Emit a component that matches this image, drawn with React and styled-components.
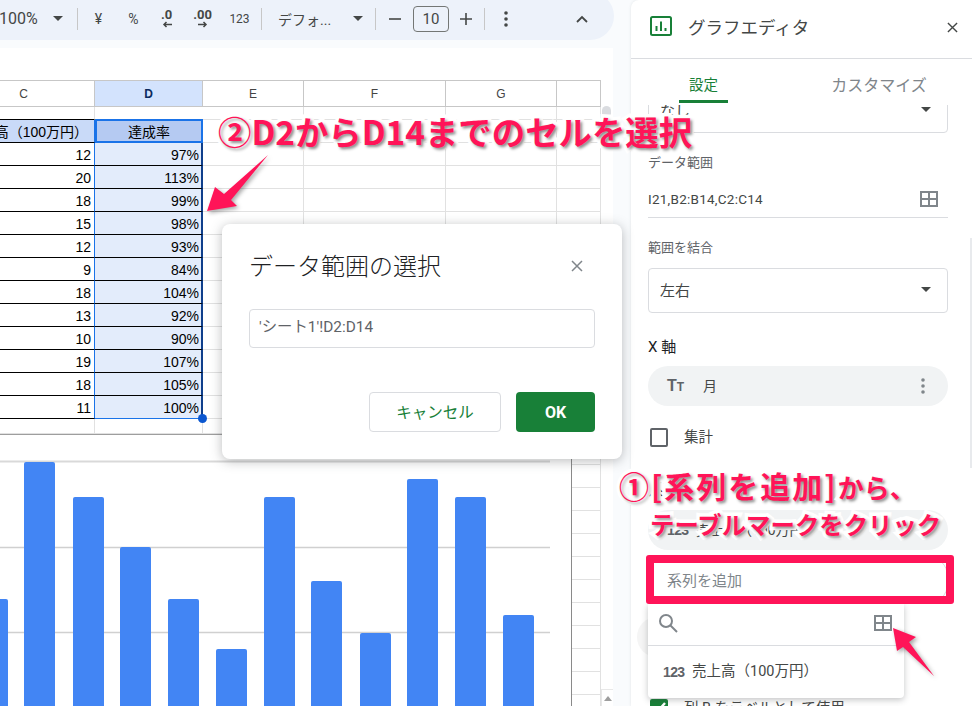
import React from 'react';
import styled, { createGlobalStyle } from 'styled-components';

const months = [
  ['12', '97%'], ['20', '113%'], ['18', '99%'], ['15', '98%'],
  ['12', '93%'], ['9', '84%'], ['18', '104%'], ['13', '92%'],
  ['10', '90%'], ['19', '107%'], ['18', '105%'], ['11', '100%'],
];

const bars = [
  [-23, 599], [24, 462], [73, 497], [120, 547], [168, 599], [216, 649],
  [264, 497], [311, 581], [360, 633], [407, 479], [455, 497], [503, 615],
];

function TableIcon() {
  return (
    <svg width="18" height="16" viewBox="0 0 18 16" fill="none" stroke="#80868b" strokeWidth="2">
      <rect x="1" y="1" width="16" height="14" />
      <path d="M1 8h16M9 1v14" />
    </svg>
  );
}

function CloseIcon({ size = 12, color = '#444746' }) {
  return (
    <svg width={size} height={size} viewBox="0 0 12 12" stroke={color} strokeWidth="1.5">
      <path d="M1 1l10 10M11 1L1 11" />
    </svg>
  );
}

function Kebab({ color = '#444746' }) {
  return (
    <svg width="4" height="16" viewBox="0 0 4 16" fill={color}>
      <circle cx="2" cy="2" r="1.8" />
      <circle cx="2" cy="8" r="1.8" />
      <circle cx="2" cy="14" r="1.8" />
    </svg>
  );
}

function Toolbar() {
  return (
    <ToolbarPill>
      <ZoomLabel>100%</ZoomLabel>
      <ToolButton $w={22}><Caret /></ToolButton>
      <ToolSep $ml={8} />
      <ToolButton $w={35} $ml={3}>¥</ToolButton>
      <ToolButton $w={35}>%</ToolButton>
      <DecimalButton $w={31}>
        <b>.0</b>
        <svg width="10" height="7" viewBox="0 0 10 7" fill="none" stroke="#444746" strokeWidth="1.5">
          <path d="M10 3.5H2M4.5 1L2 3.5 4.5 6" />
        </svg>
      </DecimalButton>
      <DecimalButton $w={41}>
        <b>.00</b>
        <svg width="10" height="7" viewBox="0 0 10 7" fill="none" stroke="#444746" strokeWidth="1.5">
          <path d="M0 3.5h8M5.5 1L8 3.5 5.5 6" />
        </svg>
      </DecimalButton>
      <ToolButton $w={33} $small>123</ToolButton>
      <ToolSep $ml={5} />
      <FontLabel>デフォ...</FontLabel>
      <ToolButton $w={22} $ml={11}><Caret /></ToolButton>
      <ToolSep $ml={6} />
      <ToolButton $w={37}>
        <svg width="12" height="2" viewBox="0 0 12 2"><path d="M0 1h12" stroke="#444746" strokeWidth="1.6" /></svg>
      </ToolButton>
      <SizeBox>10</SizeBox>
      <ToolButton $w={34}>
        <svg width="12" height="12" viewBox="0 0 12 12"><path d="M0 6h12M6 0v12" stroke="#444746" strokeWidth="1.6" /></svg>
      </ToolButton>
      <ToolSep $ml={1} />
      <ToolButton $w={42}><Kebab /></ToolButton>
      <ToolButton $w={34} $ml={38}>
        <svg width="12" height="8" viewBox="0 0 12 8" fill="none" stroke="#444746" strokeWidth="1.8">
          <path d="M1 7l5-5 5 5" />
        </svg>
      </ToolButton>
    </ToolbarPill>
  );
}

function Sheet() {
  return (
    <SheetBody>
      <GridColumn>
        <Cells>
          <ColHead $pr={47}>C</ColHead>
          <ColHead $active>D</ColHead>
          <ColHead>E</ColHead>
          <ColHead>F</ColHead>
          <ColHead>G</ColHead>
          <ColHead />

          <Cell $topTable />
          <Cell $topTable $noRight />
          <Cell /><Cell /><Cell /><Cell />

          <TitleCell>売上高（100万円）</TitleCell>
          <ActiveHead>達成率</ActiveHead>
          <Cell /><Cell /><Cell /><Cell />

          {months.map(([sales, rate], i) => (
            <React.Fragment key={i}>
              <NumberCell>{sales}</NumberCell>
              <RangeCell $last={i === months.length - 1}>
                {rate}
                {i === months.length - 1 && <FillHandle />}
              </RangeCell>
              <Cell /><Cell /><Cell /><Cell />
            </React.Fragment>
          ))}

          <Cell /><Cell /><Cell /><Cell /><Cell /><Cell />
        </Cells>
        <ChartRow>
          <ChartFrame>
            <svg width="571" height="271" viewBox="0 435 571 271">
              <path d="M0 461.5h550" stroke="#d9d9d9" strokeWidth="2" />
              <path d="M0 547.5h550M0 632.5h550" stroke="#d0d0d0" strokeWidth="1.4" />
              {bars.map(([x, top]) => (
                <path
                  key={x}
                  d={`M${x} 720V${top + 2}a2 2 0 0 1 2-2h27a2 2 0 0 1 2 2V720z`}
                  fill="#4285f4"
                />
              ))}
            </svg>
          </ChartFrame>
          <RowStrip />
        </ChartRow>
      </GridColumn>
      <ScrollTrack>
        <ScrollThumb />
        <ScrollButton />
      </ScrollTrack>
    </SheetBody>
  );
}

function RangeDialog() {
  return (
    <Dialog>
      <DialogHead>
        <DialogTitle>データ範囲の選択</DialogTitle>
        <CloseIcon size={12} color="#80868b" />
      </DialogHead>
      <DialogInput>'シート1'!D2:D14</DialogInput>
      <DialogActions>
        <CancelButton>キャンセル</CancelButton>
        <OkButton>OK</OkButton>
      </DialogActions>
    </Dialog>
  );
}

function ChartEditor() {
  return (
    <Panel>
      <PanelHead>
        <svg width="22" height="20" viewBox="0 0 22 20" fill="none">
          <rect x="1" y="1" width="20" height="18" rx="1.5" stroke="#188038" strokeWidth="2" />
          <path d="M6.5 10v5M11 5.5V15M15.5 12v3" stroke="#188038" strokeWidth="2" />
        </svg>
        <PanelTitle>グラフエディタ</PanelTitle>
        <PanelClose><CloseIcon size={11} color="#444746" /></PanelClose>
      </PanelHead>
      <Tabs>
        <Tab $active>設定</Tab>
        <Tab $w={110} $ml={96}>カスタマイズ</Tab>
      </Tabs>
      <ScrollClip>
        <Content>
          <Select>なし<Caret /></Select>
          <FieldLabel $mt={22}>データ範囲</FieldLabel>
          <RangeField>I21,B2:B14,C2:C14<TableIcon /></RangeField>
          <FieldLabel $mt={22}>範囲を結合</FieldLabel>
          <Select $mt={12}>左右<Caret /></Select>
          <SectionLabel $mt={25}>X 軸</SectionLabel>
          <SeriesPill $mt={10}>
            <TypeBadge>T<small>T</small></TypeBadge>
            <PillText>月</PillText>
            <PillMenu><Kebab color="#80868b" /></PillMenu>
          </SeriesPill>
          <CheckRow $mt={21}>
            <CheckBox />
            <CheckText>集計</CheckText>
          </CheckRow>
          <SectionLabel $mt={34}>系列</SectionLabel>
          <SeriesPill $mt={11}>
            <NumBadge>123</NumBadge>
            <PillText>売上高（100万円）</PillText>
          </SeriesPill>
          <AddField>
            系列を追加
            <HoverRing />
            <Menu>
              <MenuSearch>
                <svg width="20" height="20" viewBox="0 0 20 20" fill="none" stroke="#80868b" strokeWidth="2">
                  <circle cx="8" cy="8" r="6" />
                  <path d="M12.5 12.5L19 19" />
                </svg>
                <TableIcon />
              </MenuSearch>
              <MenuItem>
                <NumBadge>123</NumBadge>
                売上高（100万円）
              </MenuItem>
            </Menu>
          </AddField>
          <CheckRow $mt={94}>
            <CheckBox $on>
              <svg width="14" height="12" viewBox="0 0 14 12" fill="none" stroke="#fff" strokeWidth="2.4">
                <path d="M1 6l4 4 8-9" />
              </svg>
            </CheckBox>
            <CheckText>列 B をラベルとして使用</CheckText>
          </CheckRow>
        </Content>
      </ScrollClip>
      <PanelScroll />
    </Panel>
  );
}

export default function App() {
  return (
    <Root>
      <GlobalStyle />
      <SheetSide>
        <Toolbar />
        <FormulaBar />
        <Sheet />
      </SheetSide>
      <ChartEditor />
      <RangeDialog />

      <CalloutTop>②D2からD14までのセルを選択</CalloutTop>
      <Callout1>
        <Line1>①[系列を追加]<small>から、</small></Line1>
        <Line2>テーブルマークをクリック</Line2>
      </Callout1>
      <RedBox />
      <ArrowSvg width="972" height="706" viewBox="0 0 972 706">
        <path d="M207 211L215 187L224 194L268 155L231 200L237 206Z" />
        <path d="M893 628L916 637L909 642L934 676L903 647L897 651Z" />
      </ArrowSvg>
    </Root>
  );
}

const GlobalStyle = createGlobalStyle`
  html, body {
    margin: 0;
    padding: 0;
    background: #f9fbfd;
  }
`;

const Root = styled.div`
  position: relative;
  display: flex;
  width: 972px;
  height: 706px;
  overflow: hidden;
  background: #f9fbfd;
  font-family: Roboto, "Noto Sans CJK JP", sans-serif;
  color: #444746;
`;

const SheetSide = styled.div`
  display: flex;
  flex-direction: column;
  width: 631px;
  flex: none;
`;

const ToolbarPill = styled.div`
  display: flex;
  align-items: center;
  box-sizing: border-box;
  width: 614px;
  height: 48px;
  margin-top: -8px;
  padding-top: 5px;
  background: #edf2fa;
  border-radius: 0 24px 24px 0;
  flex: none;
`;

const ZoomLabel = styled.span`
  width: 48px;
  margin-left: -1px;
  flex: none;
  font-size: 16px;
`;

const ToolButton = styled.span`
  display: flex;
  align-items: center;
  justify-content: center;
  flex: none;
  width: ${p => p.$w}px;
  margin-left: ${p => p.$ml || 0}px;
  font-size: ${p => (p.$small ? 12 : 14)}px;
`;

const DecimalButton = styled(ToolButton)`
  flex-direction: column;
  line-height: 12px;
  font-size: 13px;

  b {
    font-weight: 700;
  }
`;

const Caret = styled.i`
  display: block;
  width: 0;
  height: 0;
  border-left: 5px solid transparent;
  border-right: 5px solid transparent;
  border-top: 5px solid #444746;
`;

const ToolSep = styled.span`
  width: 1px;
  height: 22px;
  flex: none;
  margin-left: ${p => p.$ml}px;
  background: #c7c7c7;
`;

const FontLabel = styled.span`
  width: 58px;
  margin-left: 16px;
  flex: none;
  font-size: 14px;
  white-space: nowrap;
`;

const SizeBox = styled.span`
  box-sizing: border-box;
  width: 36px;
  height: 26px;
  flex: none;
  border: 1px solid #747775;
  border-radius: 4px;
  font-size: 15px;
  line-height: 24px;
  text-align: center;
`;

const FormulaBar = styled.div`
  width: 613px;
  height: 32px;
  margin-top: 8px;
  background: #fff;
  flex: none;
`;

const SheetBody = styled.div`
  display: flex;
  width: 613px;
  flex: 1;
  min-height: 0;
  background: #fff;
`;

const GridColumn = styled.div`
  display: flex;
  flex-direction: column;
  width: 601px;
  flex: none;
`;

const Cells = styled.div`
  display: grid;
  grid-template-columns: 95px 108px 101px 142px 111px 44px;
  grid-template-rows: 27px 13px repeat(13, 23px) 15px;
  font-family: "Liberation Sans", "Noto Sans CJK JP", sans-serif;
  font-size: 14px;
  color: #000;
`;

const Cell = styled.div`
  box-sizing: border-box;
  border-right: 1px solid ${p => (p.$noRight ? 'transparent' : '#e1e1e1')};
  border-bottom: 1px solid ${p => (p.$topTable ? '#000' : '#e1e1e1')};
`;

const ColHead = styled.div`
  box-sizing: border-box;
  display: flex;
  align-items: center;
  justify-content: center;
  padding-right: ${p => p.$pr || 0}px;
  border-top: 1px solid #c7c7c7;
  border-right: 1px solid #c7c7c7;
  border-bottom: 1px solid #c7c7c7;
  background: ${p => (p.$active ? '#d3e3fd' : '#fff')};
  font-size: 12px;
  color: ${p => (p.$active ? '#0a2a5c' : '#444')};
  font-weight: ${p => (p.$active ? 700 : 400)};
`;

const TitleCell = styled.div`
  box-sizing: border-box;
  display: flex;
  align-items: center;
  justify-content: flex-end;
  padding-right: 6px;
  overflow: hidden;
  white-space: nowrap;
  background: #c9daf8;
  border-bottom: 1px solid #000;
  border-right: 1px solid #1a73e8;
`;

const ActiveHead = styled.div`
  box-sizing: border-box;
  display: flex;
  align-items: center;
  justify-content: center;
  background: #b5caf2;
  border: 2px solid #1a73e8;
  margin-top: -1px;
`;

const NumberCell = styled.div`
  box-sizing: border-box;
  padding-right: 3px;
  line-height: 24px;
  text-align: right;
  border-bottom: 1px solid #000;
  border-right: 1px solid #1a73e8;
`;

const RangeCell = styled.div`
  position: relative;
  box-sizing: border-box;
  padding-right: 2px;
  line-height: 24px;
  text-align: right;
  background: #e3ecfb;
  border-bottom: 1px solid ${p => (p.$last ? '#1a73e8' : '#000')};
  border-right: 2px solid #0f3f8c;
`;

const FillHandle = styled.span`
  position: absolute;
  right: -6px;
  bottom: -5px;
  z-index: 2;
  width: 9px;
  height: 9px;
  border-radius: 50%;
  background: #0b57d0;
`;

const ChartRow = styled.div`
  display: flex;
  flex: 1;
  min-height: 0;
`;

const ChartFrame = styled.div`
  box-sizing: border-box;
  width: 572px;
  flex: none;
  overflow: hidden;
  background: #fff;
  border-top: 1px solid #9e9e9e;
  border-right: 1px solid #8a8a8a;

  svg {
    display: block;
  }
`;

const RowStrip = styled.div`
  flex: 1;
  box-sizing: border-box;
  border-right: 1px solid #e1e1e1;
  background-image: linear-gradient(#e1e1e1 1px, transparent 1px);
  background-size: 100% 23px;
  background-position: 0 7px;
`;

const ScrollTrack = styled.div`
  position: relative;
  display: flex;
  flex-direction: column;
  justify-content: flex-end;
  width: 12px;
  margin-top: 26px;
  background: #fff;
`;

const ScrollThumb = styled.span`
  position: absolute;
  top: 0;
  left: 1px;
  width: 9px;
  height: 12px;
  border-radius: 5px;
  background: #dadce0;
`;

const ScrollButton = styled.div`
  display: flex;
  align-items: center;
  justify-content: center;
  height: 16px;
  border-top: 1px solid #e8e8e8;
  border-left: 1px solid #e8e8e8;

  &::before {
    content: '';
    border-left: 4px solid transparent;
    border-right: 4px solid transparent;
    border-bottom: 5px solid #9e9e9e;
  }
`;

const Dialog = styled.div`
  position: absolute;
  left: 222px;
  top: 224px;
  box-sizing: border-box;
  width: 400px;
  height: 235px;
  padding: 20px 27px 0;
  background: #fff;
  border-radius: 8px;
  box-shadow: 0 2px 12px rgba(60, 64, 67, 0.35);
`;

const DialogHead = styled.div`
  display: flex;
  align-items: center;
  justify-content: space-between;
  height: 44px;
  padding-right: 12px;
`;

const DialogTitle = styled.h2`
  margin: -4px 0 0;
  font-size: 24px;
  font-weight: 300;
  color: #202124;
`;

const DialogInput = styled.div`
  box-sizing: border-box;
  height: 39px;
  margin-top: 21px;
  padding-left: 9px;
  border: 1px solid #dadce0;
  border-radius: 4px;
  font-size: 15.4px;
  line-height: 35px;
  color: #5f6368;
`;

const DialogActions = styled.div`
  display: flex;
  justify-content: flex-end;
  gap: 15px;
  margin-top: 44px;
`;

const CancelButton = styled.button`
  box-sizing: border-box;
  width: 132px;
  height: 40px;
  padding: 0 0 2px;
  background: #fff;
  border: 1px solid #dadce0;
  border-radius: 4px;
  color: #188038;
  font: 15.5px "Noto Sans CJK JP", sans-serif;
`;

const OkButton = styled.button`
  width: 79px;
  height: 40px;
  padding: 0;
  background: #188038;
  border: 0;
  border-radius: 4px;
  color: #fff;
  font: 700 16px Roboto, sans-serif;
`;

const Panel = styled.aside`
  position: relative;
  display: flex;
  flex-direction: column;
  flex: 1;
  min-width: 0;
  background: #fff;
  border-radius: 8px 0 0 0;
  box-shadow: 0 0 3px rgba(60, 64, 67, 0.12);
`;

const PanelHead = styled.header`
  display: flex;
  align-items: center;
  box-sizing: border-box;
  height: 59px;
  padding: 0 0 6px 19px;
  border-bottom: 1px solid #dadce0;
  flex: none;
`;

const PanelTitle = styled.h1`
  margin: 0 0 0 16px;
  font-size: 17.5px;
  font-weight: 400;
  color: #444746;
`;

const PanelClose = styled.span`
  display: flex;
  margin-left: auto;
  margin-right: 14px;
  padding-top: 3px;
`;

const Tabs = styled.nav`
  display: flex;
  height: 46px;
  padding-left: 48px;
  flex: none;
`;

const Tab = styled.div`
  box-sizing: border-box;
  width: ${p => p.$w || 49}px;
  height: 44px;
  margin-left: ${p => p.$ml || 0}px;
  padding-top: 16px;
  border-bottom: 3px solid ${p => (p.$active ? '#188038' : 'transparent')};
  font-size: ${p => (p.$active ? 14.5 : 16)}px;
  line-height: 22px;
  text-align: center;
  white-space: nowrap;
  color: ${p => (p.$active ? '#188038' : '#80868b')};
`;

const ScrollClip = styled.div`
  flex: 1;
  min-height: 0;
  overflow: hidden;
`;

const Content = styled.div`
  width: 300px;
  margin-top: -17px;
  margin-left: 17px;
`;

const Select = styled.div`
  box-sizing: border-box;
  display: flex;
  align-items: center;
  justify-content: space-between;
  height: 45px;
  margin-top: ${p => p.$mt || 0}px;
  padding: 0 16px 2px 11px;
  border: 1px solid #dadce0;
  border-radius: 4px;
  font-size: 15px;
`;

const FieldLabel = styled.div`
  height: 16px;
  margin-top: ${p => p.$mt}px;
  font-size: 13px;
  line-height: 16px;
  color: #5f6368;
`;

const RangeField = styled.div`
  box-sizing: border-box;
  display: flex;
  align-items: center;
  justify-content: space-between;
  height: 38px;
  margin-top: 9px;
  padding-right: 10px;
  border-bottom: 1px solid #dadce0;
  font-size: 13.5px;
  letter-spacing: 0.25px;
`;

const SectionLabel = styled.div`
  height: 18px;
  margin-top: ${p => p.$mt}px;
  font-size: 15px;
  line-height: 18px;
  color: #202124;
`;

const SeriesPill = styled.div`
  display: flex;
  align-items: center;
  height: 40px;
  margin-top: ${p => p.$mt}px;
  padding-left: 19px;
  background: #f1f3f4;
  border-radius: 20px;
`;

const TypeBadge = styled.span`
  width: 36px;
  font: 700 16px "Liberation Sans", sans-serif;
  color: #5f6368;

  small {
    font-size: 12px;
  }
`;

const NumBadge = styled.span`
  width: 29px;
  flex: none;
  font: 700 14px "Liberation Sans", sans-serif;
  letter-spacing: -0.6px;
  color: #5f6368;
`;

const PillText = styled.span`
  margin-top: -3px;
  font-size: 14px;
`;

const PillMenu = styled.span`
  display: flex;
  margin-left: auto;
  margin-right: 23px;
`;

const CheckRow = styled.div`
  display: flex;
  align-items: center;
  gap: 16px;
  height: 20px;
  margin-top: ${p => p.$mt}px;
`;

const CheckText = styled.span`
  margin-top: 1px;
  font-size: 14.5px;
  line-height: 18px;
`;

const CheckBox = styled.span`
  box-sizing: border-box;
  display: flex;
  align-items: center;
  justify-content: center;
  width: 18px;
  height: 19px;
  margin-left: 2px;
  flex: none;
  border: 2px solid ${p => (p.$on ? '#188038' : '#5f6368')};
  border-radius: 2px;
  background: ${p => (p.$on ? '#188038' : '#fff')};
`;

const AddField = styled.div`
  position: relative;
  box-sizing: border-box;
  height: 48px;
  margin-top: 6px;
  padding-left: 18px;
  border: 1px solid #dadce0;
  border-radius: 20px;
  font-size: 15px;
  line-height: 48px;
  color: #80868b;
`;

const HoverRing = styled.span`
  position: absolute;
  left: -12px;
  top: 60px;
  width: 40px;
  height: 40px;
  border-radius: 50%;
  background: #f5f5f5;
`;

const Menu = styled.div`
  position: absolute;
  left: -1px;
  top: 47px;
  width: 256px;
  height: 94px;
  background: #fff;
  border-radius: 0 0 4px 4px;
  box-shadow: 0 2px 6px rgba(60, 64, 67, 0.3);
  color: #444746;
`;

const MenuSearch = styled.div`
  display: flex;
  align-items: center;
  justify-content: space-between;
  box-sizing: border-box;
  height: 42px;
  padding: 0 12px 4px 10px;
  border-bottom: 1px solid #dadce0;
`;

const MenuItem = styled.div`
  display: flex;
  align-items: center;
  height: 52px;
  padding-left: 15px;
  box-sizing: border-box;
  font-size: 14.5px;
  line-height: 20px;
`;

const PanelScroll = styled.span`
  position: absolute;
  right: 0;
  top: 238px;
  width: 2px;
  height: 230px;
  background: #e8eaed;
`;

const calloutText = `
  font-family: "Noto Sans CJK JP", sans-serif;
  font-weight: 700;
  color: #ff1458;
  -webkit-text-stroke: 7px #fff;
  paint-order: stroke fill;
  text-shadow: 2px 2px 3px rgba(0, 0, 0, 0.45);
  white-space: nowrap;
`;

const CalloutTop = styled.div`
  position: absolute;
  left: 218px;
  top: 107px;
  font-size: 33.4px;
  line-height: 48px;
  ${calloutText}
`;

const Callout1 = styled.div`
  position: absolute;
  left: 619px;
  top: 463px;
  ${calloutText}
`;

const Line1 = styled.div`
  font-size: 30px;
  line-height: 44px;
  letter-spacing: 2px;

  small {
    font-size: 26px;
    letter-spacing: 0;
  }
`;

const Line2 = styled.div`
  margin-left: 31px;
  font-size: 24.4px;
  line-height: 30px;
`;

const RedBox = styled.div`
  position: absolute;
  left: 646px;
  top: 555px;
  box-sizing: border-box;
  width: 308px;
  height: 49px;
  border: 8px solid #ff1458;
  border-radius: 3px;
`;

const ArrowSvg = styled.svg`
  position: absolute;
  left: 0;
  top: 0;
  fill: #ff1458;
  filter: drop-shadow(2px 2px 2px rgba(0, 0, 0, 0.35));
  pointer-events: none;
`;
